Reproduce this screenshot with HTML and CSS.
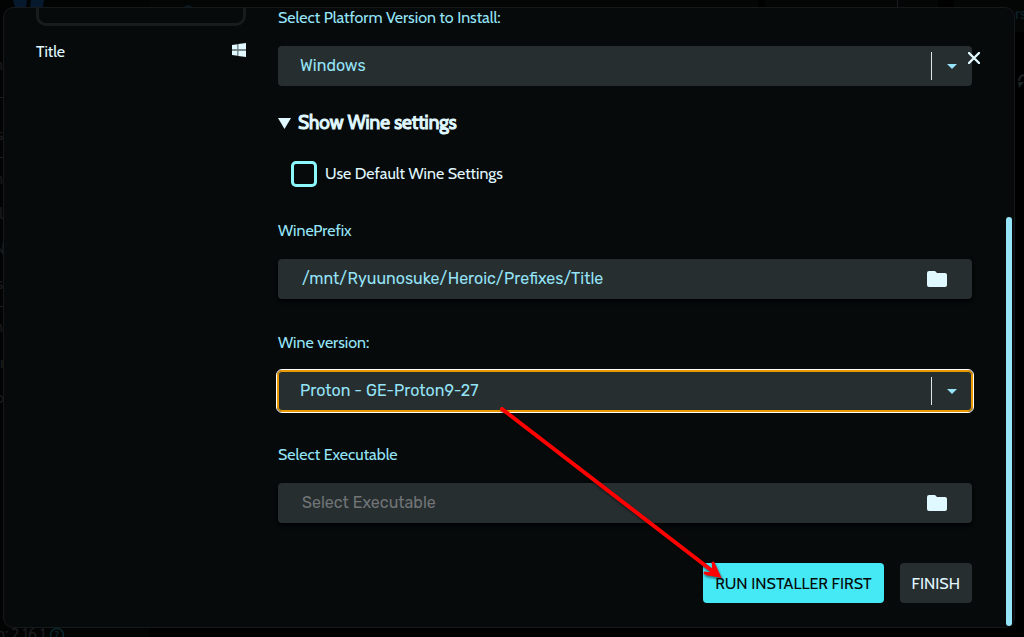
FILE: index.html
```html
<!DOCTYPE html>
<html lang="en">
<head>
<meta charset="utf-8">
<title>Install game</title>
<link rel="stylesheet" href="styles.css">
</head>
<body>
<div class="backdrop" aria-hidden="true">
  <div class="side-strip"></div>
  <div class="top-strip"></div>
  <svg class="backdrop-art" width="1024" height="637" viewBox="0 0 1024 637">
    <path fill="#07192c" d="M13 0h14l-1 7H15zM31 0h13l-1 7H30z"/>
    <path fill="#071a1f" d="M183 8q5-6 11 0z"/>
    <path fill="#000" d="M758 0h7v7h-7zM938 0h16v7h-16z"/>
    <path stroke="#1a1e20" d="M897.500 0v7M0 97.500h3M0 157.500h3M0 306.500h3"/>
    <path fill="none" stroke="#1b2224" stroke-width="2" d="M1024 75q-5 1-5 6"/>
    <path fill="#1b2224" d="M1018 82h6l-5 6z"/>
    <circle cx="57" cy="635" r="6.500" fill="none" stroke="#06292f" stroke-width="1.500"/>
    <g class="art-text" text-anchor="end">
      <text x="3" y="70">n</text><text x="3" y="140">s</text>
      <text x="3" y="184">n</text><text x="3" y="219">l</text><text x="5" y="254">N</text>
      <text x="3" y="289">s</text><text x="3" y="332">n</text><text x="5" y="368">r</text>
      <text x="4" y="403">o</text>
    </g>
    <g class="art-text">
      <text x="-4" y="639">n:</text><text x="11" y="639">2.16.1</text>
      <text class="art-help" x="54" y="639">?</text><text class="art-blue" x="1015" y="19">rs</text>
    </g>
  </svg>
</div>

<main class="dialog" role="dialog" aria-label="Install game">
  <aside class="sidebar">
    <div class="cover"></div>
    <div class="game">
      <span>Title</span>
      <svg width="14" height="16" viewBox="0 -1 14 16" fill="#e0f8ff" aria-label="Windows">
        <path d="M0 2l5.600-.8v5.400H0zM6.200 1.100L14 0v6.600H6.200zM0 7.400h5.600v5.400L0 12zM6.200 7.400H14V14l-7.800-1.100z"/>
        <path fill="#7f8d90" d="M5.600 1.200h.6v11.700h-.6zM0 6.600h14v.8H0z"/>
      </svg>
    </div>
  </aside>

  <form class="form" onsubmit="return false">
    <div class="field">
      <label for="platform">Select Platform Version to Install:</label>
      <div class="select-wrap">
        <select id="platform"><option>Windows</option></select>
      </div>
    </div>

    <details class="wine" open>
      <summary><svg width="13" height="11" viewBox="0 0 13 11"><path d="M0 0h13L6.500 11z" fill="#e0f8ff"/></svg>Show Wine settings</summary>
      <div class="check">
        <input type="checkbox" id="defaults">
        <label for="defaults">Use Default Wine Settings</label>
      </div>
      <div class="field">
        <label for="prefix">WinePrefix</label>
        <div class="path">
          <input type="text" id="prefix" value="/mnt/Ryuunosuke/Heroic/Prefixes/Title">
          <button type="button" aria-label="Browse prefix"><svg width="20" height="16" viewBox="0 0 20 16"><path d="M2 0h6l2 2h8q2 0 2 2v10q0 2-2 2H2q-2 0-2-2V2q0-2 2-2z" fill="#e0f8ff"/></svg></button>
        </div>
      </div>
      <div class="field">
        <label for="wine">Wine version:</label>
        <div class="select-wrap focused">
          <select id="wine"><option>Proton - GE-Proton9-27</option></select>
        </div>
      </div>
    </details>

    <div class="field">
      <label for="exe">Select Executable</label>
      <div class="path">
        <input type="text" id="exe" placeholder="Select Executable">
        <button type="button" aria-label="Browse executable"><svg width="20" height="16" viewBox="0 0 20 16"><path d="M2 0h6l2 2h8q2 0 2 2v10q0 2-2 2H2q-2 0-2-2V2q0-2 2-2z" fill="#e0f8ff"/></svg></button>
      </div>
    </div>

    <div class="actions">
      <button type="button" class="btn primary">RUN INSTALLER FIRST</button>
      <button type="button" class="btn">FINISH</button>
    </div>
  </form>

  <div class="scroll-track"><div class="scroll-thumb"></div></div>

  <button type="button" class="close" aria-label="Close"><svg width="12" height="12" viewBox="0 0 12 12"><path d="M1 1l10 10M11 1L1 11" stroke="#e0f8ff" stroke-width="2.400" stroke-linecap="round"/></svg></button>
</main>

<svg class="pointer" width="240" height="190" viewBox="0 0 240 190" aria-hidden="true">
  <g fill="none" stroke="#f00" stroke-linecap="round">
    <path stroke-width="4" d="M12 10L225 174"/>
    <path stroke-width="3" stroke-linejoin="miter" d="M223 164L229 177L215 174"/>
  </g>
  <path fill="#f00" d="M222 163l8 15-15-2 7-5z"/>
</svg>
</body>
</html>
```
FILE: styles.css
```css
* { box-sizing: border-box; }

body {
  margin: 0;
  min-height: 100vh;
  padding: 7px 9px 9px 3px;
  display: flex;
  background: #000;
  color: #e0f8ff;
  font: 16px/20px Cabin, Lato, sans-serif;
  overflow: hidden;
}

button, input, select { font: inherit; margin: 0; }
button { cursor: pointer; }

.backdrop { position: absolute; inset: 0; overflow: hidden; }
.side-strip { position: absolute; inset: 0 auto 0 0; width: 149px; background: #020303; }
.top-strip { position: absolute; inset: 0 0 auto 149px; height: 32px; background: #040606; }
.backdrop-art { position: absolute; inset: 0; }
.art-text { fill: #1b1d1e; font-size: 16px; }
.art-help { fill: #06292f; font-size: 11px; }
.art-blue { fill: #0a2028; }

.dialog {
  position: relative;
  flex: 1;
  display: grid;
  grid-template-columns: 210px minmax(0, 1fr) 6px;
  padding: 0 2px 0 32px;
  border: 1px solid #15191b;
  border-radius: 10px;
  background: #060a0b;
}

.cover {
  height: 18px;
  border: 3px solid #181c1d;
  border-top: 0;
  border-radius: 0 0 10px 10px;
}
.game {
  display: flex;
  justify-content: space-between;
  align-items: flex-start;
  margin-top: 16px;
}

.form { padding: 0 34px 23px 32px; }

.field { display: flex; flex-direction: column; gap: 18px; }
.field label { color: #95e4f7; }

.select-wrap, .path {
  position: relative;
  display: flex;
  height: 40px;
  border-radius: 4px;
  background: #272e30;
}
.select-wrap select {
  flex: 1;
  appearance: none;
  padding: 0 60px 0 22px;
  border: 0;
  border-radius: 4px;
  outline: 0;
  background: transparent;
  color: #95e4f7;
  font: 16px/20px Rubik, Roboto, sans-serif;
}
.select-wrap::before {
  content: "";
  position: absolute;
  inset: 6px 40px 6px auto;
  width: 1px;
  background: #e0e6e8;
}
.select-wrap::after {
  content: "";
  position: absolute;
  top: 18px;
  right: 15px;
  border: 5px solid transparent;
  border-top-color: #95e4f7;
  border-bottom: 0;
}
.focused {
  outline: 1px solid #fff;
  outline-offset: 1px;
  box-shadow: 0 0 0 1px #e89a00, inset 0 0 0 1px #e89a00;
}

.path { box-shadow: 0 2px 4px #000; }
.path input {
  flex: 1;
  min-width: 0;
  padding: 0 12px 0 24px;
  border: 0;
  outline: 0;
  background: transparent;
  color: #95e4f7;
  font: 16px/20px Rubik, Roboto, sans-serif;
}
.path input::placeholder { color: #717577; opacity: 1; }
.path button {
  display: grid;
  place-items: center;
  width: 70px;
  padding: 0;
  border: 0;
  background: none;
}

.wine { margin: 25px 0 34px; }
.wine summary {
  display: flex;
  align-items: center;
  gap: 7px;
  list-style: none;
  font-size: 19px;
  font-weight: 400;
  line-height: 24px;
  -webkit-text-stroke: 1px #e0f8ff;
}
.wine .field { margin-top: 34px; }
.check {
  display: flex;
  align-items: center;
  gap: 8px;
  margin: 26px 0 0 13px;
}
.check input {
  appearance: none;
  width: 26px;
  height: 26px;
  border: 3px solid #8bf8fb;
  border-radius: 5px;
}

.actions {
  display: flex;
  justify-content: flex-end;
  gap: 16px;
  margin-top: 40px;
}
.btn {
  height: 40px;
  padding: 1px 12px 0;
  border: 0;
  border-radius: 4px;
  background: #272e30;
  color: #e0f8ff;
}
.primary { background: #45e8f5; color: #060a0b; }

.scroll-track { display: flex; padding: 209px 0 1px; }
.scroll-thumb { width: 6px; border-radius: 3px; background: #95e4f7; }

.close {
  position: absolute;
  top: 40px;
  right: 30px;
  display: grid;
  place-items: center;
  width: 20px;
  height: 20px;
  padding: 0;
  border: 0;
  background: none;
}

.pointer {
  position: absolute;
  top: 399px;
  left: 490px;
  filter: drop-shadow(1px 2px 1px rgba(0, 0, 0, 0.5));
  pointer-events: none;
}
```
